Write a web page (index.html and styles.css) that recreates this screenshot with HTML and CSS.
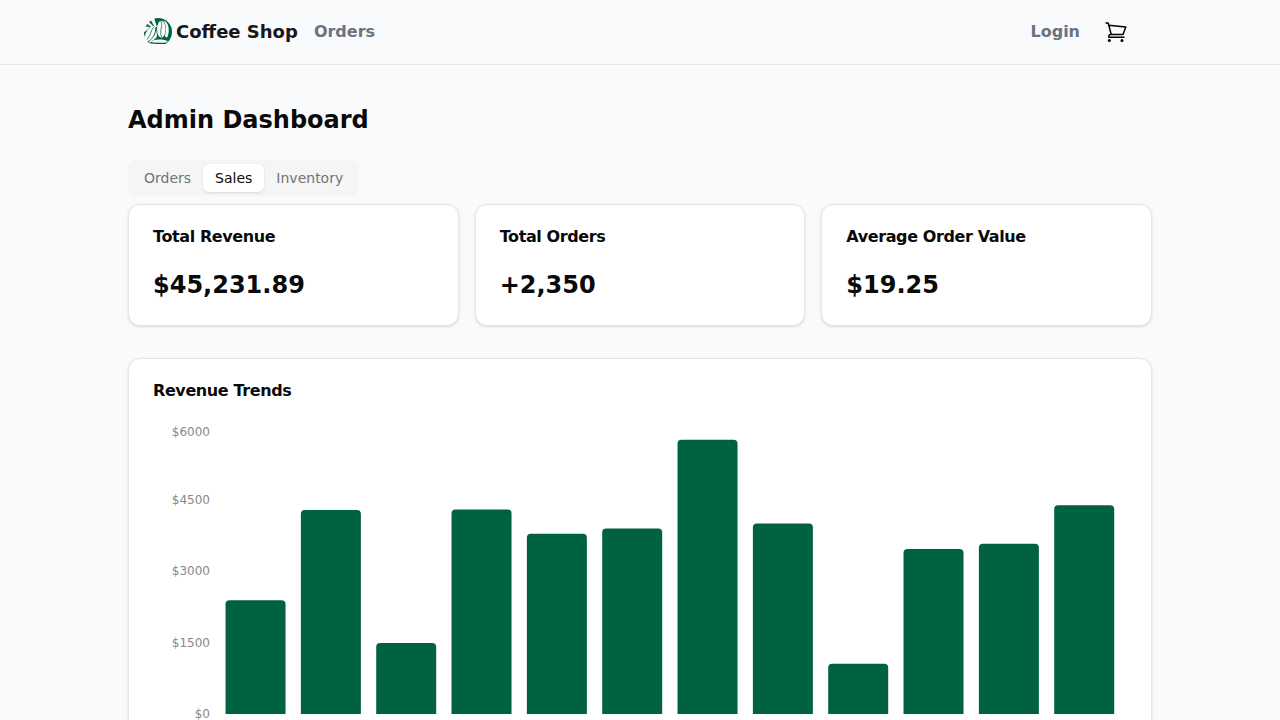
FILE: index.html
```html
<!DOCTYPE html>
<html lang="en">
<head>
<meta charset="utf-8">
<title>Coffee Shop</title>
<link rel="stylesheet" href="styles.css">
</head>
<body>
<header class="header">
  <nav class="nav">
    <a class="brand">
      <svg class="logo" viewBox="0 0 28 28">
        <circle cx="14" cy="14" r="14" fill="#006241"/>
        <g fill="#f9fafb">
          <path d="M-1 -1H11.500L10.500 1.500L13 9L11 9.500L7 2.500L5 4L10 9L8.500 10L3.500 6L1.500 8.500L6 9L3 12L-1 15Z"/>
          <path d="M11 7.500C6 8 .5 13.500 .8 20.500C1.500 24 4 23.500 6 22C10 18.500 12 13 11 7.500Z"/>
          <ellipse cx="17.300" cy="11.200" rx="4.300" ry="8.500"/>
          <path d="M19.500 2.500C24.500 4 26.300 12 23.500 19C22.500 20 21 19 21 17.500C22.500 12 22.500 7 19.500 2.500Z"/>
          <path d="M12.200 11.500C12.500 15 13.500 17 12.500 19.500L6.500 24.500L4.500 24C9.500 20 11.800 16 12.200 11.500Z"/>
          <path d="M7.500 24C9 20.500 21 20.800 23.500 23.200C24 24.500 20 24.800 18 24.800L9 24.600Z"/>
          <path d="M3.500 25C9 26 14 26.200 22 26L20 29H5Z"/>
        </g>
        <path d="M10.500 8.500C6.500 12 7.500 16 3 21.500M16.800 3C19.500 8 15 12 17.500 19" fill="none" stroke="#006241" stroke-width=".75"/>
      </svg>
      <span>Coffee Shop</span>
    </a>
    <a class="link">Orders</a>
    <a class="link login">Login</a>
    <svg class="cart" viewBox="0 0 24 24" fill="none" stroke="#000" stroke-width="1.500" stroke-linejoin="round">
      <path d="M1.500 3H4.200L7.200 14.500M4.800 5.300L21.800 7L19 14.500H6.300C4.800 14.500 4.300 17.300 5 17.300H20.500"/>
      <circle cx="5.300" cy="20.500" r="1.500" fill="#000" stroke="none"/>
      <circle cx="18" cy="20.500" r="1.500" fill="#000" stroke="none"/>
    </svg>
  </nav>
</header>
<main class="main">
  <h1 class="heading">Admin Dashboard</h1>
  <div class="tabs">
    <button class="tab">Orders</button>
    <button class="tab active">Sales</button>
    <button class="tab">Inventory</button>
  </div>
  <section class="stats">
    <article class="card"><h2 class="title">Total Revenue</h2><div class="value">$45,231.89</div></article>
    <article class="card"><h2 class="title">Total Orders</h2><div class="value">+2,350</div></article>
    <article class="card"><h2 class="title">Average Order Value</h2><div class="value">$19.25</div></article>
  </section>
  <section class="card">
    <h2 class="title">Revenue Trends</h2>
    <svg class="chart" viewBox="0 0 974 350">
      <g class="ticks">
        <text x="57" y="295">$0</text>
        <text x="57" y="224">$1500</text>
        <text x="57" y="152">$3000</text>
        <text x="57" y="81">$4500</text>
        <text x="57" y="13">$6000</text>
      </g>
      <g class="bars">
        <path d="M72.530 291V181.300a4 4 0 0 1 4-4h52a4 4 0 0 1 4 4V291Z"/>
        <path d="M147.870 291V91a4 4 0 0 1 4-4h52a4 4 0 0 1 4 4V291Z"/>
        <path d="M223.200 291V224a4 4 0 0 1 4-4h52a4 4 0 0 1 4 4V291Z"/>
        <path d="M298.530 291V90.500a4 4 0 0 1 4-4h52a4 4 0 0 1 4 4V291Z"/>
        <path d="M373.870 291V114.700a4 4 0 0 1 4-4h52a4 4 0 0 1 4 4V291Z"/>
        <path d="M449.200 291V109.500a4 4 0 0 1 4-4h52a4 4 0 0 1 4 4V291Z"/>
        <path d="M524.530 291V20.800a4 4 0 0 1 4-4h52a4 4 0 0 1 4 4V291Z"/>
        <path d="M599.870 291V104.500a4 4 0 0 1 4-4h52a4 4 0 0 1 4 4V291Z"/>
        <path d="M675.200 291V244.800a4 4 0 0 1 4-4h52a4 4 0 0 1 4 4V291Z"/>
        <path d="M750.530 291V130a4 4 0 0 1 4-4h52a4 4 0 0 1 4 4V291Z"/>
        <path d="M825.870 291V124.700a4 4 0 0 1 4-4h52a4 4 0 0 1 4 4V291Z"/>
        <path d="M901.200 291V86.200a4 4 0 0 1 4-4h52a4 4 0 0 1 4 4V291Z"/>
      </g>
    </svg>
  </section>
</main>
</body>
</html>
```
FILE: styles.css
```css
* { box-sizing: border-box; margin: 0; }
body { background: #f9fafb; color: #0a0a0a; font-family: "DejaVu Sans", sans-serif; }
.header { border-bottom: 1px solid #e5e5e5; height: 65px; }
.nav { width: 1024px; height: 64px; margin: 0 auto; padding: 0 24px 0 16px; display: flex; align-items: center; gap: 16px; }
.brand { display: flex; align-items: center; gap: 4px; font-size: 18px; line-height: 28px; font-weight: 700; color: #171717; }
.logo { width: 28px; height: 28px; display: block; }
.link { font-size: 16px; line-height: 24px; font-weight: 700; color: #6b7280; }
.login { margin-left: auto; }
.cart { width: 24px; height: 24px; margin-left: 8px; }
.main { width: 1024px; margin: 0 auto; padding-top: 39px; }
.heading { font-size: 24px; line-height: 32px; font-weight: 700; margin-bottom: 24px; }
.tabs { display: flex; width: max-content; height: 36px; padding: 4px; border-radius: 8px; background: #f5f5f5; margin-bottom: 8px; }
.tab { border: 0; background: transparent; padding: 4px 12px; border-radius: 6px; font: 14px/20px "DejaVu Sans", sans-serif; color: #737373; }
.active { background: #fff; color: #0a0a0a; box-shadow: 0 1px 3px rgb(0 0 0 / .1), 0 1px 2px -1px rgb(0 0 0 / .1); }
.stats { display: grid; grid-template-columns: repeat(3, 1fr); gap: 16px; margin-bottom: 32px; }
.card { background: #fff; border: 1px solid #e5e5e5; border-radius: 12px; padding: 24px; box-shadow: 0 1px 3px rgb(0 0 0 / .1), 0 1px 2px -1px rgb(0 0 0 / .1); }
.title { font-size: 16px; line-height: 16px; letter-spacing: -.4px; margin-bottom: 24px; }
.value { font-size: 24px; line-height: 32px; font-weight: 700; }
.chart { display: block; width: 974px; height: 350px; }
.ticks { font-size: 12px; fill: #888; text-anchor: end; }
.bars { fill: #006241; }
```
